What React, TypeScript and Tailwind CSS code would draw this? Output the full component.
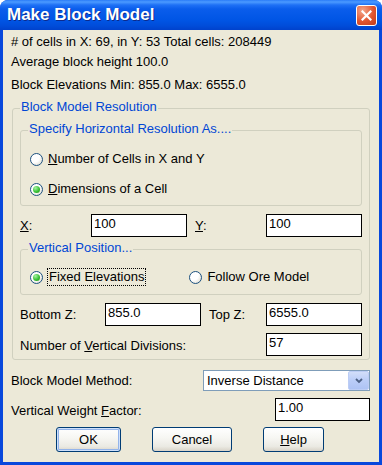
import React from 'react';

const Radio = ({ checked }: { checked?: boolean }) => (
  <span className="w-[13px] h-[13px] shrink-0 rounded-full border border-[#1c5180] bg-[radial-gradient(circle_at_30%_30%,#ffffff_45%,#d6d3c4)] flex items-center justify-center">
    {checked && (
      <span className="w-[7px] h-[7px] rounded-full bg-[radial-gradient(circle_at_35%_30%,#a6f3a3,#3cc238_55%,#168f13)]" />
    )}
  </span>
);

const Edit = ({ value, className }: { value: string; className: string }) => (
  <div className={`h-[23px] shrink-0 border border-black bg-white pl-[2px] pt-[1px] leading-[16px] ${className}`}>
    {value}
  </div>
);

const Group = (props: any) => {
  const { label, className, children } = props;
  return (
    <div className={`relative border border-[#d0d0bf] rounded-[3px] ${className}`}>
      <span className="absolute left-[7px] top-[-10px] px-[1px] bg-[#ece9d8] text-[#0046d5] leading-[16px] whitespace-nowrap">
        {label}
      </span>
      {children}
    </div>
  );
};

const Button = (props: any) => {
  const { children, className } = props;
  return (
    <div
      className={`h-[25px] rounded-[3px] border border-[#003c74] bg-[linear-gradient(to_bottom,#ffffff,#f6f6f2_45%,#ebeae3_80%,#d8d3c8)] flex items-center justify-center ${className}`}
    >
      {children}
    </div>
  );
};

export default function App() {
  return (
    <div className="w-[382px] h-[465px] flex flex-col rounded-t-[8px] overflow-hidden bg-[#0848dc] font-['Liberation_Sans',Arial,sans-serif] text-[13px] text-black">
      {/* title bar */}
      <div className="h-[30px] shrink-0 flex items-center pl-[7px] pr-[5px] bg-[linear-gradient(to_bottom,#2a7cf8_0px,#4b9aff_2px,#1e70f5_5px,#0a5deb_9px,#0055e5_20px,#004cd9_26px,#0042cc_30px)]">
        <span className="flex-1 text-white font-bold text-[17px] leading-[20px] [text-shadow:1px_1px_0_#0d2a8c]">
          Make Block Model
        </span>
        <div className="w-[21px] h-[21px] rounded-[3px] border border-white bg-[radial-gradient(circle_at_30%_25%,#f4a78b,#e2552f_55%,#c23c1b)] flex items-center justify-center">
          <svg width="11" height="11" viewBox="0 0 11 11">
            <path d="M1.5 1.5 L9.5 9.5 M9.5 1.5 L1.5 9.5" stroke="white" strokeWidth="2.2" strokeLinecap="square" />
          </svg>
        </div>
      </div>

      {/* body */}
      <div className="flex-1 mx-[3px] mb-[3px] bg-[#ece9d8] pl-[8px] pr-[9px] flex flex-col leading-[16px]">
        <div className="mt-[4px]"># of cells in X: 69, in Y: 53 Total cells: 208449</div>
        <div className="mt-[4px]">Average block height 100.0</div>
        <div className="mt-[7px]">Block Elevations Min: 855.0 Max: 6555.0</div>

        <Group label="Block Model Resolution" className="mt-[15px] ml-[1px] px-[7px] pb-[3px]">
          <Group label="Specify Horizontal Resolution As...." className="mt-[21px] pb-[8px]">
            <div className="mt-[20px] pl-[9px] flex items-center gap-[5px]">
              <Radio />
              <span><u>N</u>umber of Cells in X and Y</span>
            </div>
            <div className="mt-[14px] pl-[9px] flex items-center gap-[5px]">
              <Radio checked />
              <span><u>D</u>imensions of a Cell</span>
            </div>
          </Group>

          <div className="mt-[8px] flex items-center">
            <span className="w-[71px] pt-[1px]"><u>X</u>:</span>
            <Edit value="100" className="w-[96px]" />
            <span className="w-[71px] ml-[8px] pt-[1px]"><u>Y</u>:</span>
            <Edit value="100" className="w-[96px]" />
          </div>

          <Group label="Vertical Position..." className="mt-[12px] pb-[8px]">
            <div className="mt-[18px] pl-[9px] flex items-center">
              <Radio checked />
              <span className="ml-[4px] border border-dotted border-black px-[1px] leading-[16px]">Fixed Elevations</span>
              <span className="ml-[43px]">
                <Radio />
              </span>
              <span className="ml-[5px]">Follow Ore Model</span>
            </div>
          </Group>

          <div className="mt-[8px] flex items-center">
            <span className="w-[85px] pt-[1px]">Bottom Z:</span>
            <Edit value="855.0" className="w-[96px]" />
            <span className="w-[57px] ml-[8px] pt-[1px]">Top Z:</span>
            <Edit value="6555.0" className="w-[96px]" />
          </div>

          <div className="mt-[7px] flex items-center justify-between">
            <span className="pt-[2px]">Number of <u>V</u>ertical Divisions:</span>
            <Edit value="57" className="w-[96px]" />
          </div>
        </Group>

        <div className="mt-[10px] flex items-center justify-between">
          <span>Block Model Method:</span>
          <div className="w-[167px] h-[21px] border border-[#7f9db9] bg-white flex items-center">
            <span className="flex-1 pl-[3px]">Inverse Distance</span>
            <div className="w-[21px] h-[19px] rounded-[2px] border border-[#bccdf5] bg-[linear-gradient(to_bottom,#d2def9,#bacdf8_50%,#aec3f4)] flex items-center justify-center">
              <svg width="8" height="6" viewBox="0 0 8 6">
                <path d="M1 1 L4 4 L7 1" stroke="#4d6185" strokeWidth="1.8" fill="none" />
              </svg>
            </div>
          </div>
        </div>

        <div className="mt-[7px] flex items-center justify-between">
          <span className="pt-[2px]">Vertical Weight <u>F</u>actor:</span>
          <Edit value="1.00" className="w-[95px]" />
        </div>

        <div className="mt-[6px] pl-[45px] flex gap-[31px]">
          <Button className="w-[65px] shadow-[inset_0_0_0_1px_#cee0fb,inset_0_0_0_2px_#94b4ea]">OK</Button>
          <Button className="w-[80px]">Cancel</Button>
          <Button className="w-[61px]"><span><u>H</u>elp</span></Button>
        </div>
      </div>
    </div>
  );
}
